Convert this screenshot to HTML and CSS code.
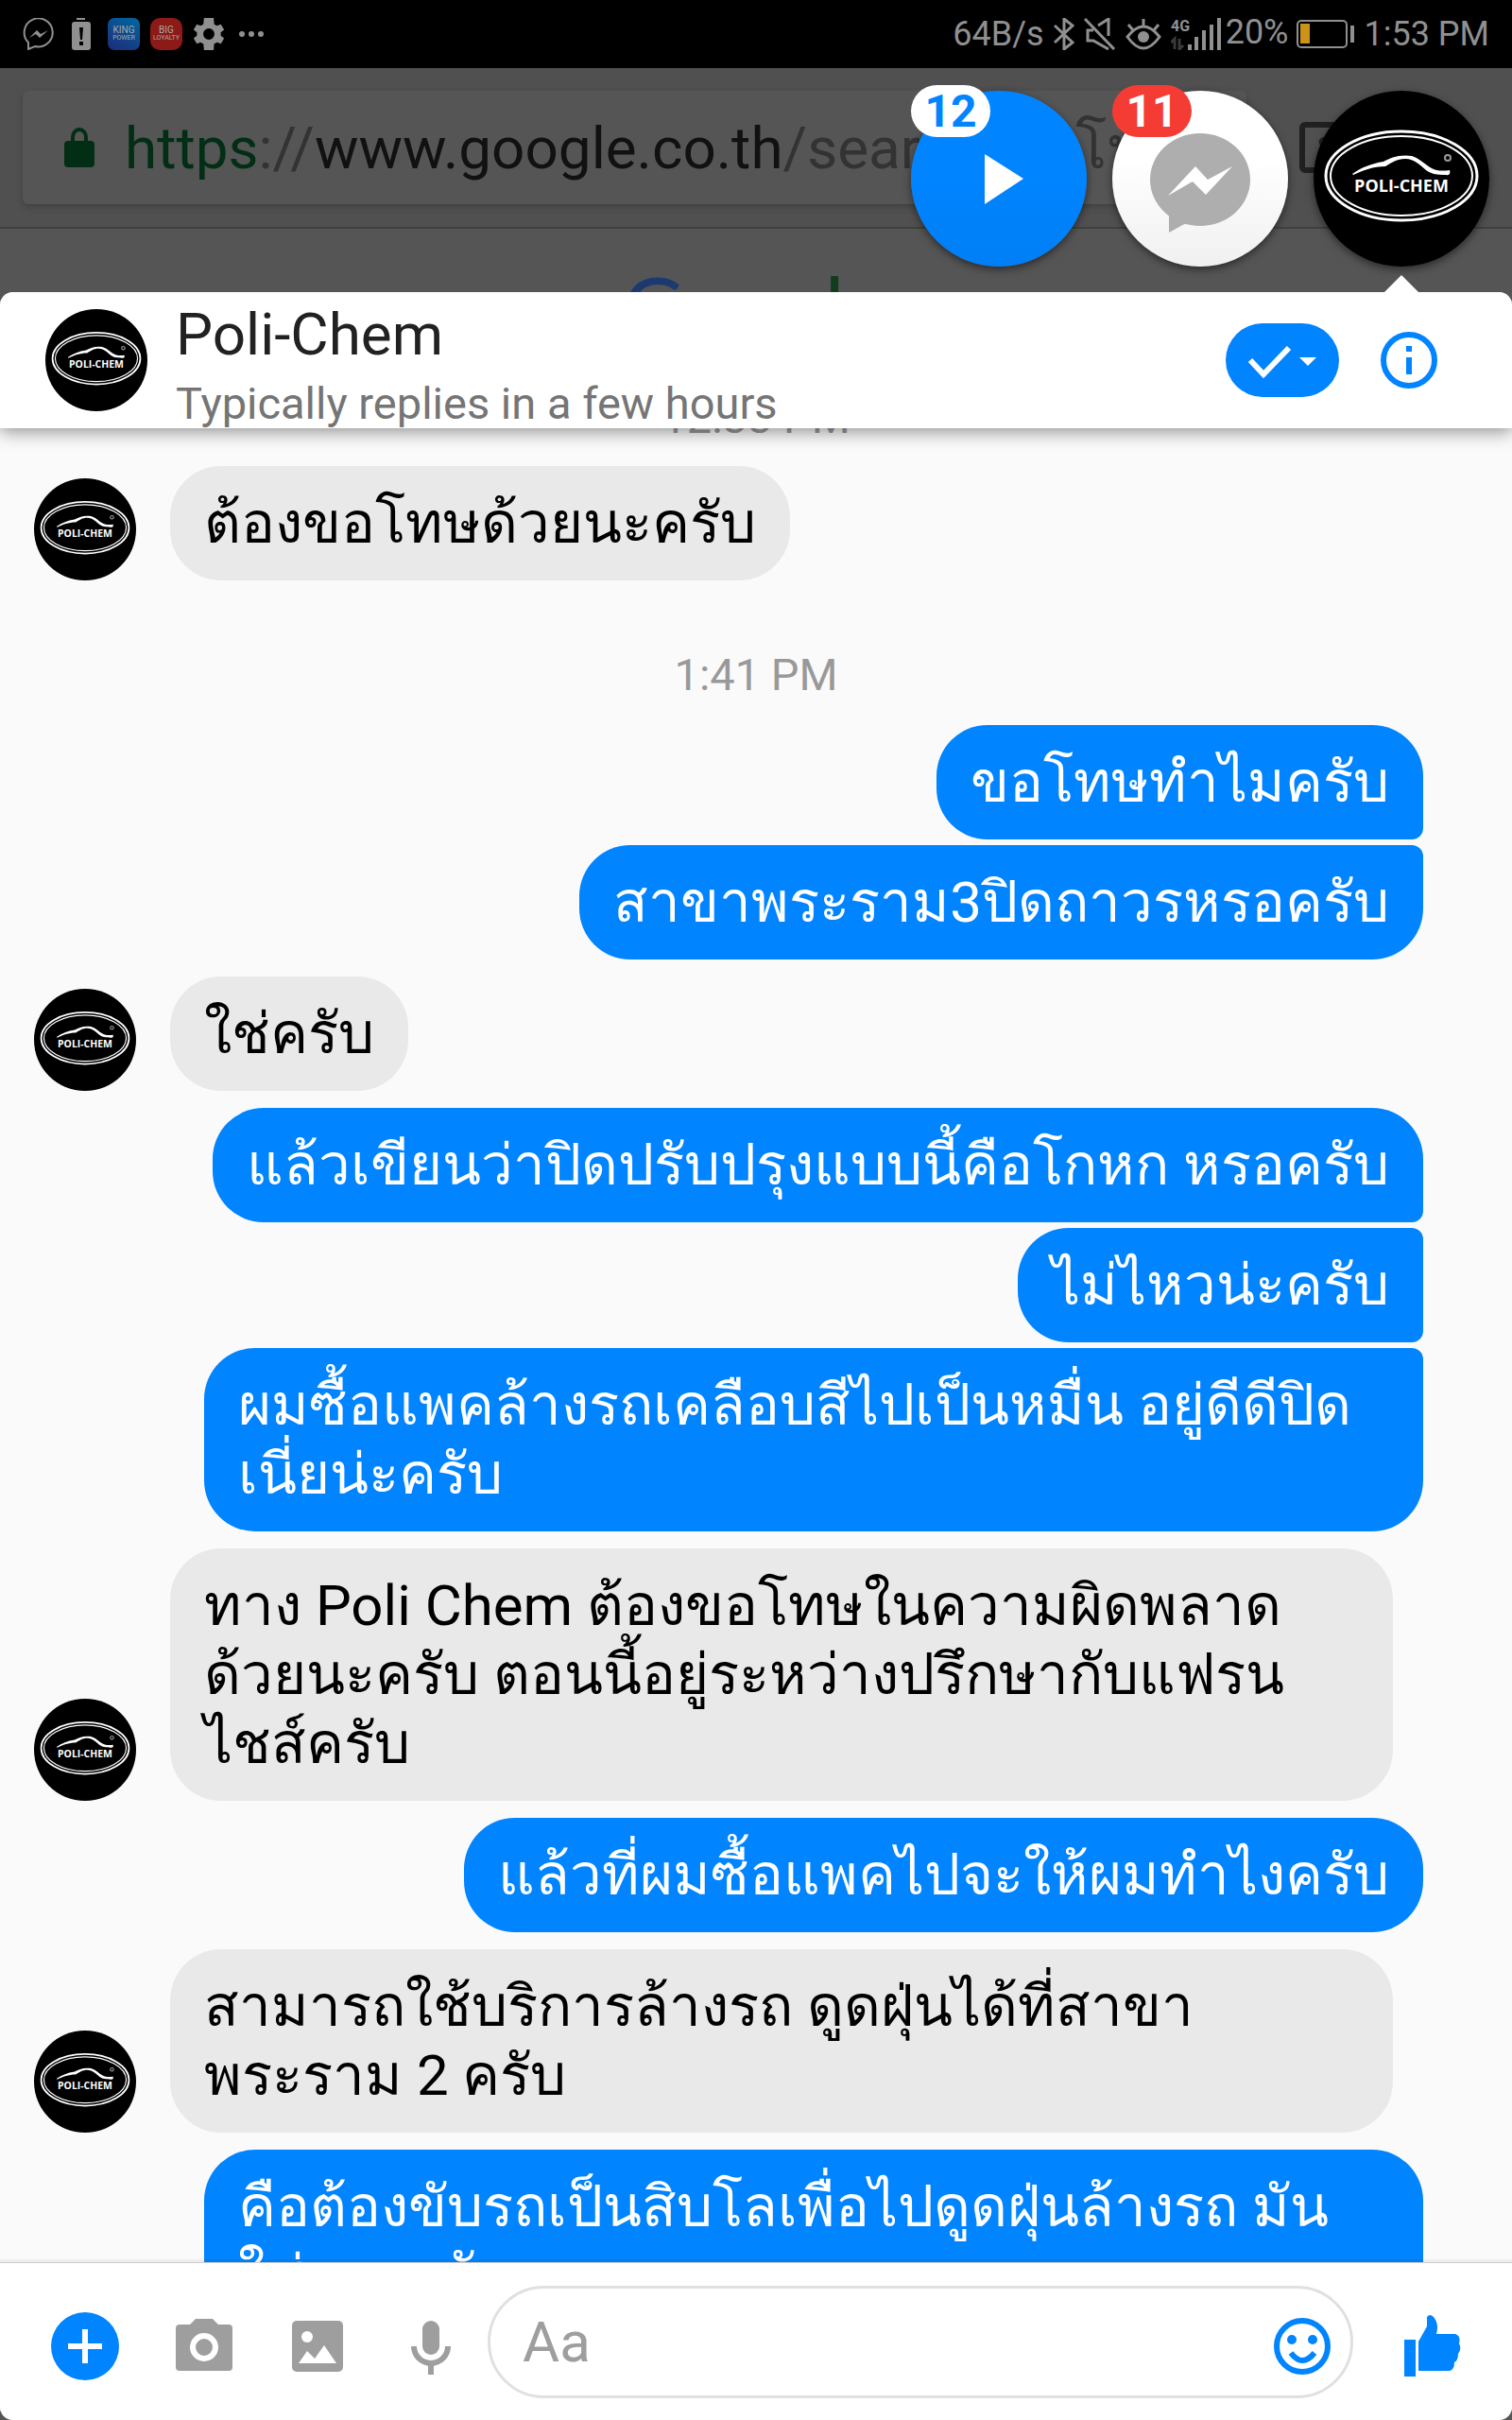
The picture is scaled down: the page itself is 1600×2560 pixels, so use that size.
FILE: index.html
```
<!DOCTYPE html>
<html lang="th">
<head>
<meta charset="utf-8">
<title>Poli-Chem</title>
<meta name="viewport" content="width=device-width, initial-scale=1">
<link rel="stylesheet" href="styles.css">
</head>
<body>
<svg class="sprite" aria-hidden="true">
  <symbol id="logo" viewBox="0 0 186 186">
    <circle cx="93" cy="93" r="93" fill="#000"/>
    <g fill="none" stroke="#fff">
      <ellipse cx="93" cy="90" rx="80" ry="47" stroke-width="3"/>
      <ellipse cx="93" cy="90" rx="75" ry="42" stroke-width="2"/>
    </g>
    <path d="M41 88c10-7 20-11 33-13 7-4 17-8 30-6 9 3 14 9 21 13 6 3 12 3 19 2 1 3 0 6-4 5-10 0-15-1-21-5-6-5-12-12-22-12-9 0-14 4-21 8-13 0-23 4-34 9z" fill="#fff"/>
    <circle cx="142" cy="71" r="3" fill="none" stroke="#999" stroke-width="2"/>
    <text x="93" y="107" text-anchor="middle" class="logo-text">POLI-CHEM</text>
  </symbol>
</svg>

<div class="screen">
  <header class="status">
    <div class="status-group">
      <svg class="status-icon" viewBox="0 0 34 34"><path d="M6 33v-7A15 15 0 1 1 13 30z" fill="none" stroke="#909090" stroke-width="2"/><path d="M7 21l8-8 4 4 8-4-9 8-4-4z" fill="#909090"/></svg>
      <svg class="status-icon" viewBox="0 0 34 34"><path d="M12 0h9v2h-9zM10 4h14q3 0 3 3v24q0 3-3 3H10q-3 0-3-3V7q0-3 3-3z" fill="#909090"/><path d="M15 10h4l-1 13h-2zM15 25h4v4h-4z" fill="#000"/></svg>
      <span class="app app-king"><b>KING</b>POWER</span>
      <span class="app app-big"><b>BIG</b>LOYALTY</span>
      <svg class="status-icon" viewBox="2 2 20 20"><path fill="#909090" d="M19.400 13a7.500 7.500 0 0 0 0-2l2.100-1.600-2-3.500-2.500 1a7.300 7.300 0 0 0-1.700-1L15 2H9l-.4 3.900a7.300 7.300 0 0 0-1.700 1l-2.400-1-2 3.500L4.600 11a7.500 7.500 0 0 0 0 2l-2.100 1.600 2 3.500 2.400-1a7.300 7.300 0 0 0 1.700 1L9 22h6l.3-3.900a7.300 7.300 0 0 0 1.700-1l2.500 1 2-3.500zM12 15.500a3.500 3.500 0 1 1 0-7 3.500 3.500 0 0 1 0 7z"/></svg>
      <svg class="status-dots" viewBox="0 0 26 34"><g fill="#909090"><circle cx="3" cy="17" r="3"/><circle cx="13" cy="17" r="3"/><circle cx="23" cy="17" r="3"/></g></svg>
    </div>
    <div class="status-group status-right">
      <span>64B/s</span>
      <svg class="bt" viewBox="0 0 22 34"><path d="M1 8l19 18-9 7V1l9 7L1 26" fill="none" stroke="#909090" stroke-width="3"/></svg>
      <svg class="status-icon" viewBox="0 0 34 34"><path d="M1 1l31 32M10 13H4v11h6l16 9M15 8l11-7v18" fill="none" stroke="#909090" stroke-width="3"/></svg>
      <svg class="eye" viewBox="0 0 38 34"><path d="M2 20q17-22 34 0-17 24-34 0zM19 1v8M3 7l5 6M35 7l-5 6" fill="none" stroke="#909090" stroke-width="3"/><circle cx="19" cy="20" r="6" fill="#909090"/></svg>
      <svg class="signal" viewBox="0 0 54 34"><text x="0" y="14" class="signal-text">4G</text><path d="M4 33V22l-4 4M9 22v11l4-4" fill="none" stroke="#3a3a3a" stroke-width="3"/><path d="M18 28h4v6h-4zM25 20h4v14h-4zM33 13h4v21h-4zM41 7h4v27h-4zM49 0h4v34h-4z" fill="#909090"/></svg>
      <span class="percent">20%</span>
      <svg class="battery" viewBox="0 0 62 30"><rect x="1" y="1" width="52" height="28" rx="4" fill="none" stroke="#909090" stroke-width="2"/><path d="M4 4h10v21H4z" fill="#cd9218"/><path d="M57 6h4v18h-4z" fill="#909090"/></svg>
      <span>1:53 PM</span>
    </div>
  </header>

  <div class="browser">
    <div class="toolbar">
      <div class="address">
        <svg class="lock" viewBox="0 0 32 42"><path fill="#032e16" fill-rule="evenodd" d="M4 14h3v-4a9 10 0 0 1 18 0v4h3q4 0 4 4v20q0 4-4 4H4q-4 0-4-4V18q0-4 4-4zm7 0h10v-4a5 6 0 0 0-10 0z"/></svg>
        <span class="url"><span class="scheme">https</span><span class="sep">://</span>www.google.co.th<span class="path">/search?q=โปลิเคม</span></span>
      </div>
      <span class="tabs">8</span>
    </div>
    <div class="page"><span class="g-blue">G</span><span class="g-red">o</span><span class="g-yellow">o</span><span class="g-blue">g</span><span class="g-green">l</span><span class="g-red">e</span></div>
    <nav class="heads">
      <button class="head head-play" aria-label="Stories"><svg viewBox="0 0 186 186"><path d="M78 67v53l41-27z" fill="#fff"/></svg><span class="badge">12</span></button>
      <button class="head head-inbox" aria-label="Inbox"><svg viewBox="0 0 186 186"><ellipse cx="93" cy="94" rx="53" ry="49" fill="#aeaeae"/><path d="M60 128v22l20-11z" fill="#aeaeae"/><path d="M59 111l29-31 13 14 26-14-28 30-14-14z" fill="#fff"/></svg><span class="badge badge-red">11</span></button>
      <button class="head head-page" aria-label="Poli-Chem"><svg viewBox="0 0 186 186"><use href="#logo"/></svg></button>
    </nav>
  </div>

  <main class="chat">
    <div class="chat-header">
      <svg class="avatar"><use href="#logo"/></svg>
      <div class="who">
        <h1>Poli-Chem</h1>
        <p>Typically replies in a few hours</p>
      </div>
      <button class="done" aria-label="Mark as done"><svg viewBox="0 0 120 78"><path d="M26 39l14 15 27-28" fill="none" stroke="#fff" stroke-width="6"/><path d="M78 36h18l-9 9z" fill="#fff"/></svg></button>
      <button class="info" aria-label="Details"><svg viewBox="0 0 60 60"><circle cx="30" cy="30" r="27" fill="none" stroke="#0084ff" stroke-width="6"/><path d="M27 15h6v6h-6zM27 27h6v18h-6z" fill="#0084ff"/></svg></button>
    </div>

    <div class="thread">
      <time class="stamp stamp-first">12:33 PM</time>
      <div class="row"><svg class="avatar"><use href="#logo"/></svg><p class="bubble">ต้องขอโทษด้วยนะครับ</p></div>
      <time class="stamp">1:41 PM</time>
      <div class="row me"><p class="bubble first">ขอโทษทำไมครับ</p></div>
      <div class="row me joined"><p class="bubble last">สาขาพระราม3ปิดถาวรหรอครับ</p></div>
      <div class="row"><svg class="avatar"><use href="#logo"/></svg><p class="bubble">ใช่ครับ</p></div>
      <div class="row me"><p class="bubble first">แล้วเขียนว่าปิดปรับปรุงแบบนี้คือโกหก หรอครับ</p></div>
      <div class="row me joined"><p class="bubble first last">ไม่ไหวน่ะครับ</p></div>
      <div class="row me joined"><p class="bubble last wide">ผมซื้อแพคล้างรถเคลือบสีไปเป็นหมื่น อยู่ดีดีปิด<br>เนี่ยน่ะครับ</p></div>
      <div class="row"><svg class="avatar"><use href="#logo"/></svg><p class="bubble wide">ทาง Poli Chem ต้องขอโทษในความผิดพลาด<br>ด้วยนะครับ ตอนนี้อยู่ระหว่างปรึกษากับแฟรน<br>ไชส์ครับ</p></div>
      <div class="row me"><p class="bubble">แล้วที่ผมซื้อแพคไปจะให้ผมทำไงครับ</p></div>
      <div class="row"><svg class="avatar"><use href="#logo"/></svg><p class="bubble wide">สามารถใช้บริการล้างรถ ดูดฝุ่นได้ที่สาขา<br>พระราม 2 ครับ</p></div>
      <div class="row me"><p class="bubble wide">คือต้องขับรถเป็นสิบโลเพื่อไปดูดฝุ่นล้างรถ มัน<br>ใช่หรอครับ</p></div>
    </div>

    <form class="composer">
      <button type="button" class="tool tool-more" aria-label="More"><svg viewBox="0 0 72 72"><circle cx="36" cy="36" r="36" fill="#0084ff"/><path d="M33 18h6v15h15v6H39v15h-6V39H18v-6h15z" fill="#fff"/></svg></button>
      <button type="button" class="tool" aria-label="Camera"><svg viewBox="0 0 72 72"><path fill="#9e9e9e" fill-rule="evenodd" d="M27 7h18l6 6h11q4 0 4 4v41q0 4-4 4H10q-4 0-4-4V17q0-4 4-4h11zM36 22a15 15 0 1 0 0 30 15 15 0 0 0 0-30zM36 28a9 9 0 1 1 0 18 9 9 0 0 1 0-18z"/></svg></button>
      <button type="button" class="tool" aria-label="Gallery"><svg viewBox="0 0 72 72"><rect x="9" y="9" width="54" height="54" rx="5" fill="#9e9e9e"/><circle cx="25" cy="26" r="6" fill="#fff"/><path d="M16 54l9-13 8 8 10-14 13 19z" fill="#fff"/></svg></button>
      <button type="button" class="tool" aria-label="Voice"><svg viewBox="0 0 72 72"><rect x="27" y="9" width="18" height="36" rx="9" fill="#9e9e9e"/><path d="M18 36a18 18 0 0 0 36 0" fill="none" stroke="#9e9e9e" stroke-width="6"/><path d="M33 52h6v14h-6z" fill="#9e9e9e"/></svg></button>
      <div class="field">
        <input type="text" placeholder="Aa" aria-label="Message">
        <button type="button" class="emoji" aria-label="Emoji"><svg viewBox="0 0 60 60"><g fill="none" stroke="#0084ff" stroke-width="6"><circle cx="30" cy="30" r="27"/><path d="M18 37q12 16 25 0"/></g><circle cx="19" cy="23" r="5" fill="#0084ff"/><circle cx="41" cy="23" r="5" fill="#0084ff"/></svg></button>
      </div>
      <button type="button" class="like" aria-label="Like"><svg viewBox="0 0 60 66"><path fill="#0084ff" d="M0 26h12v39H0zM15 28l9-16V2q3-4 7 0 6 7 3 18h20q6 2 4 10 3 6-1 11 0 7-4 9 0 8-5 9H15z"/></svg></button>
    </form>
  </main>
</div>
</body>
</html>
```
FILE: styles.css
```
* { box-sizing: border-box; }
body { margin: 0; background: #555; font-family: Roboto, "Noto Sans", sans-serif; }
h1, p { margin: 0; font-weight: 400; }
button { border: 0; padding: 0; background: none; }
svg { display: block; }
.sprite { position: absolute; width: 0; height: 0; }
.logo-text { font: 700 18px "Open Sans", sans-serif; fill: #fff; }
.screen { display: flex; flex-direction: column; height: 100vh; overflow: hidden; }

.status { display: flex; justify-content: space-between; align-items: center; flex: none; height: 72px; padding: 0 24px; background: #000; color: #909090; font-size: 36px; }
.status-group { display: flex; align-items: center; gap: 11px; white-space: nowrap; }
.status-icon { width: 34px; height: 34px; }
.status-dots { width: 26px; height: 34px; margin-left: 4px; }
.status-right { gap: 10px; }
.app { display: flex; flex-direction: column; align-items: center; justify-content: center; width: 34px; height: 34px; border-radius: 7px; color: #aaa; font-size: 7px; line-height: 8px; }
.app b { font-weight: 400; font-size: 10px; }
.app-king { background: linear-gradient(30deg, #1e2a78, #0068a0); }
.app-big { background: #8c1a16; border-radius: 10px; }
.bt { width: 22px; height: 34px; }
.eye { width: 38px; height: 34px; }
.signal { width: 54px; height: 34px; }
.signal-text { font: 700 16px Roboto, sans-serif; fill: #909090; }
.percent { margin: 0 -2px 4px -6px; }
.battery { width: 62px; height: 30px; }

.browser { position: relative; flex: none; height: 237px; background: #555; }
.toolbar { display: flex; align-items: center; gap: 56px; height: 170px; padding: 24px; padding-right: 171px; background: #505050; border-bottom: 2px solid #404040; }
.address { display: flex; align-items: center; gap: 32px; flex: 1; min-width: 0; height: 120px; padding-left: 44px; overflow: hidden; background: #555; border-radius: 6px; box-shadow: 0 3px 6px #404040; }
.lock { flex: none; width: 32px; height: 42px; }
.url { color: #111; font-size: 62px; white-space: nowrap; }
.scheme { color: #032e16; }
.sep, .path { color: #333; }
.tabs { width: 54px; height: 54px; flex: none; border: 6px solid #202020; border-radius: 6px; color: #202020; font-size: 30px; line-height: 42px; text-align: center; }
.page { height: 67px; padding-top: 36px; overflow: hidden; text-align: center; font: 90px/90px Lato, sans-serif; }
.g-blue { color: #1c3a70; }
.g-red { color: #5a1812; }
.g-yellow { color: #5a4402; }
.g-green { color: #113d1f; }

.heads { position: absolute; top: 24px; right: 24px; display: flex; gap: 27px; }
.head { position: relative; width: 186px; height: 186px; border-radius: 50%; box-shadow: 0 3px 8px rgba(0, 0, 0, .5); }
.head svg { width: 186px; height: 186px; }
.head-play { background: linear-gradient(#0084ff 50%, #007ff5); }
.head-inbox { background: linear-gradient(#fff 40%, #f0f0f0); }
.head-page::after { content: ""; position: absolute; top: 195px; left: 73px; border: 20px solid transparent; border-top: 0; border-bottom-color: #fff; }
.badge { position: absolute; top: -6px; left: 0; width: 84px; height: 55px; border-radius: 28px; background: #fff; color: #0084ff; font: 700 48px/55px Roboto, sans-serif; text-align: center; }
.badge-red { background: #f53c34; color: #fff; }

.chat { display: flex; flex-direction: column; flex: 1; min-height: 0; overflow: hidden; border-radius: 14px; background: #fafafa; }
.chat-header { position: relative; z-index: 1; display: flex; align-items: center; flex: none; height: 144px; padding: 0 79px 0 48px; background: #fff; box-shadow: 0 3px 18px rgba(0, 0, 0, .45); }
.avatar { flex: none; width: 108px; height: 108px; }
.who { flex: 1; align-self: flex-start; margin-left: 30px; padding-top: 9px; }
.who h1 { color: #212121; font-size: 62px; line-height: 72px; }
.who p { color: #757575; font-size: 47px; line-height: 73px; }
.done { width: 120px; height: 78px; border-radius: 39px; background: #0084ff; }
.done svg { width: 120px; height: 78px; }
.info { margin-left: 44px; }
.info svg, .emoji svg { width: 60px; height: 60px; }

.thread { flex: 1; min-height: 0; overflow: hidden; padding: 0 94px 0 36px; }
.stamp { display: block; margin: 70px -58px 23px 0; padding-left: 22px; padding-right: 22px; color: #999; font-size: 47px; line-height: 60px; text-align: center; }
.stamp-first { margin-top: -41px; margin-bottom: 21px; }
.row { display: flex; align-items: flex-end; gap: 36px; margin-top: 18px; }
.row.me { justify-content: flex-end; padding-left: 180px; }
.row.me.joined { margin-top: 6px; }
.stamp + .row { margin-top: 0; }
.bubble { margin-right: 32px; padding: 24px 36px; border-radius: 54px; background: #e9e9e9; color: #000; font-size: 60px; line-height: 73px; }
.bubble.wide { flex: 1; }
.me .bubble { margin-right: 0; background: #0084ff; color: #fff; }
.me .first { border-bottom-right-radius: 12px; }
.me .last { border-top-right-radius: 12px; }

.composer { position: relative; display: flex; align-items: center; flex: none; height: 167px; padding: 0 54px; background: #fff; border-top: 1px solid #ccc; box-shadow: 0 -3px 0 rgba(0, 0, 0, .05); }
.tool { flex: none; width: 72px; height: 72px; margin-top: 10px; margin-right: 48px; }
.tool-more { margin-right: 54px; }
.tool svg { width: 72px; height: 72px; }
.field { display: flex; align-items: center; flex: 1; min-width: 0; height: 119px; margin-left: -24px; margin-right: 54px; padding: 0 21px 0 34px; border: 3px solid #e0e0e0; border-radius: 60px; }
.field input { flex: 1; min-width: 0; border: 0; padding: 0; outline: 0; background: none; font: 60px Roboto, sans-serif; }
.field input::placeholder { color: #9e9e9e; opacity: 1; }
.emoji, .like { margin-top: 10px; }
.like svg { width: 60px; height: 66px; }
```
